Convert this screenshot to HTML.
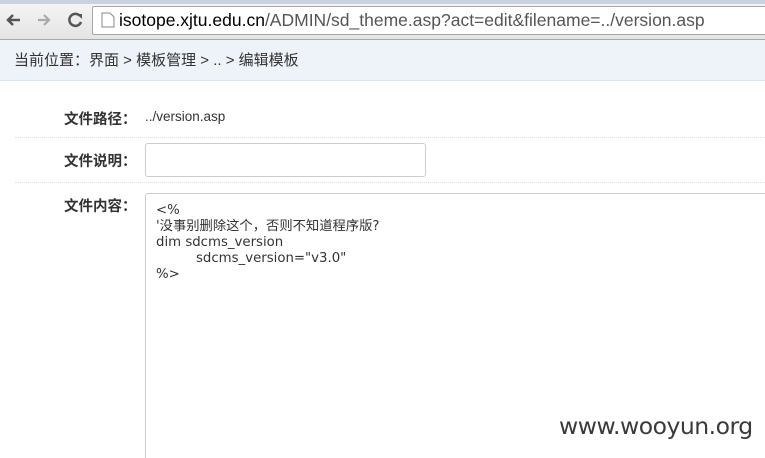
<!DOCTYPE html>
<html style="overflow:hidden;width:765px;height:458px"><head><meta charset="utf-8"><style>
body{margin:0;width:765px;height:458px;overflow:hidden;background:#fff;font-family:"Liberation Sans","Noto Sans CJK SC",sans-serif;position:relative}
.tabs{position:absolute;left:0;top:0;width:765px;height:5px;background:#c9d3de}
.tb{position:absolute;left:0;top:4px;width:765px;height:35px;background:linear-gradient(#f4f4f4,#e4e4e4);border-bottom:1px solid #a8a8a8}
.addr{position:absolute;left:92px;top:6px;width:680px;height:27px;background:#fff;border:1px solid #a6a6a6;border-radius:2px;font-size:17.5px;line-height:27px;color:#555}
.addr b{font-weight:normal;color:#000}
.bc{position:absolute;left:0;top:40px;width:765px;height:41px;background:#eef3fa;border-bottom:1px solid #dde3ea;font-size:15px;line-height:42px;color:#333;padding-left:14px;box-sizing:border-box}
.lbl{position:absolute;font-size:14.5px;font-weight:bold;color:#333;left:64px}
.dl{position:absolute;left:15px;width:750px;border-top:1px dotted #ddd}
.in{position:absolute;border:1px solid #ccc;border-radius:3px;background:#fff}
pre{margin:0;font-family:"DejaVu Sans","Noto Sans CJK SC",sans-serif;font-size:13.3px;line-height:16px;color:#333}
.wm{position:absolute;left:559px;top:412px;font-size:23.5px;color:#3a3a3a;font-family:"DejaVu Sans",sans-serif;letter-spacing:-0.5px}
</style></head><body>
<div class="tabs"></div>
<div class="tb">
<svg width="90" height="30" style="position:absolute;left:0;top:2px">
<path d="M20 14H8M13 9l-5 5 5 5" stroke="#555" stroke-width="2.5" fill="none"/>
<path d="M38 14h11M44 9l5 5-5 5" stroke="#aaa" stroke-width="2.2" fill="none"/>
<path d="M80 10a6 6 0 1 0 1 6" stroke="#555" stroke-width="2.5" fill="none"/><path d="M77 8h5v5z" fill="#555"/>
</svg>
</div>
<div class="addr"><svg width="14" height="16" style="position:absolute;left:8px;top:5px"><path d="M1 1h8l4 4v10H1z" fill="#fff" stroke="#888"/></svg><span style="position:absolute;left:26px"><b>isotope.xjtu.edu.cn</b>/ADMIN/sd_theme.asp?act=edit&amp;filename=../version.asp</span></div>
<div class="bc">当前位置：界面 &gt; 模板管理 &gt; .. &gt; 编辑模板</div>
<div class="lbl" style="top:108px">文件路径：</div>
<div style="position:absolute;left:145px;top:109px;font-size:13.5px;color:#333">../version.asp</div>
<div class="dl" style="top:137px"></div>
<div class="lbl" style="top:150px">文件说明：</div>
<div class="in" style="left:145px;top:143px;width:279px;height:32px"></div>
<div class="dl" style="top:182px"></div>
<div class="lbl" style="top:195px">文件内容：</div>
<div class="in" style="left:145px;top:193px;width:640px;height:280px;border-radius:3px 0 0 0">
<pre style="position:absolute;left:10px;top:9px">&lt;%
'没事别删除这个，否则不知道程序版?
dim sdcms_version
<span style="padding-left:40px">sdcms_version="v3.0"</span>
%&gt;</pre></div>
<div class="wm">www.wooyun.org</div>
</body></html>
